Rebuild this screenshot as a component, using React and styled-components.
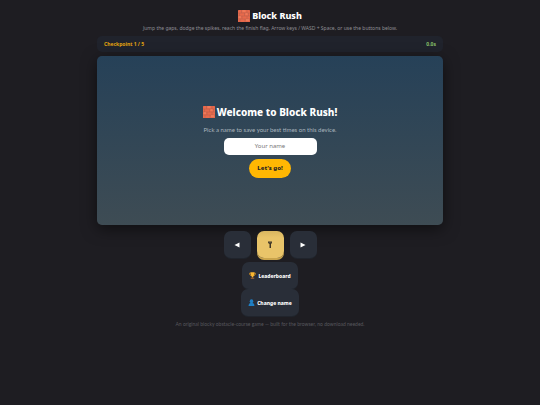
import React, { useState } from 'react'
import styled, { createGlobalStyle } from 'styled-components'

const GlobalStyle = createGlobalStyle`
  * {
    box-sizing: border-box;
  }

  body {
    margin: 0;
    min-height: 100vh;
    background: #1e1d22;
    color: #fff;
    font-family: 'Noto Sans', 'Open Sans', sans-serif;
  }

  button,
  input {
    font-family: inherit;
  }
`

function BrickIcon() {
  return (
    <svg width="12" height="12" viewBox="0 0 24 24" aria-hidden="true">
      <rect width="24" height="24" rx="1" fill="#e8694b" />
      <path
        d="M0 6h24M0 12h24M0 18h24M7 0v6M18 0v6M3 6v6M13 6v6M21 6v6M8 12v6M18 12v6M4 18v6M14 18v6"
        stroke="#b8604d"
        strokeWidth="1.1"
      />
      <path d="M9 2h6M15 8h4M1 14h5M16 20h6" stroke="#f58a68" strokeWidth="2" />
    </svg>
  )
}

function TrophyIcon() {
  return (
    <svg width="7" height="7" viewBox="0 0 24 24" aria-hidden="true">
      <path d="M6 4H2c0 6 2 8 6 9M18 4h4c0 6-2 8-6 9" fill="none" stroke="#e79a22" strokeWidth="2.5" />
      <path d="M5 1h14c0 9-2 13-5 15v3h-4v-3C7 14 5 10 5 1z" fill="#fcb830" />
      <path d="M6 19h12v5H6z" fill="#8a5a32" />
    </svg>
  )
}

function PersonIcon() {
  return (
    <svg width="7" height="7" viewBox="0 0 24 24" aria-hidden="true">
      <ellipse cx="12" cy="8" rx="6" ry="7" fill="#1f7fc4" />
      <path d="M2 24c0-7 3-9 7-10h6c4 1 7 3 7 10z" fill="#1f7fc4" />
    </svg>
  )
}

function Triangle({ left }) {
  return (
    <svg width="6" height="6" viewBox="0 0 12 12" aria-hidden="true">
      <path d={left ? 'M11 1v10L1 6z' : 'M1 1v10l10-5z'} fill="#fff" />
    </svg>
  )
}

function JumpIcon() {
  return (
    <svg width="6" height="8" viewBox="0 0 12 16" aria-hidden="true">
      <path d="M2 1h8v3L8 6v8H5V6L2 4z" fill="#3d3526" />
      <path d="M3 3h6" stroke="#756440" strokeWidth="1" />
    </svg>
  )
}

function App() {
  const [name, setName] = useState('')

  return (
    <Page>
      <GlobalStyle />
      <Header>
        <Title>
          <BrickIcon />
          Block Rush
        </Title>
        <Tagline>
          Jump the gaps, dodge the spikes, reach the finish flag. Arrow keys / WASD + Space, or use the buttons below.
        </Tagline>
      </Header>

      <StatusBar>
        <Status $color="#e5a60f">Checkpoint 1 / 5</Status>
        <Status $color="#86c06a">0.0s</Status>
      </StatusBar>

      <Stage>
        <Welcome onSubmit={(e) => e.preventDefault()}>
          <WelcomeTitle>
            <BrickIcon />
            Welcome to Block Rush!
          </WelcomeTitle>
          <Hint>Pick a name to save your best times on this device.</Hint>
          <NameInput
            aria-label="Your name"
            placeholder="Your name"
            value={name}
            onChange={(e) => setName(e.target.value)}
          />
          <StartButton type="submit">Let's go!</StartButton>
        </Welcome>
      </Stage>

      <Controls>
        <PadButton aria-label="Move left">
          <Triangle left />
        </PadButton>
        <PadButton $jump aria-label="Jump">
          <JumpIcon />
        </PadButton>
        <PadButton aria-label="Move right">
          <Triangle />
        </PadButton>
      </Controls>

      <Menu>
        <MenuButton>
          <TrophyIcon />
          Leaderboard
        </MenuButton>
        <MenuButton>
          <PersonIcon />
          Change name
        </MenuButton>
      </Menu>

      <Footer>An original blocky obstacle-course game — built for the browser, no download needed.</Footer>
    </Page>
  )
}

const Page = styled.div`
  display: flex;
  flex-direction: column;
  align-items: center;
  width: 100%;
  max-width: 362px;
  margin: 0 auto;
  padding: 8px 8px 16px;
`

const Header = styled.header`
  display: flex;
  flex-direction: column;
  align-items: center;
  text-align: center;
`

const Title = styled.h1`
  display: flex;
  align-items: center;
  gap: 2px;
  margin: 0;
  font-size: 9px;
  line-height: 15px;
  font-weight: 800;
`

const Tagline = styled.p`
  margin: 0;
  color: #8e8e94;
  font-size: 5px;
  line-height: 11px;
`

const StatusBar = styled.div`
  display: flex;
  align-items: center;
  justify-content: space-between;
  width: 100%;
  margin: 2px 0 4px;
  padding: 0 7px;
  border-radius: 5px;
  background: #20232c;
  line-height: 16px;
`

const Status = styled.span`
  color: ${(p) => p.$color};
  font-size: 5px;
  font-weight: 700;
`

const Stage = styled.main`
  display: flex;
  align-items: center;
  justify-content: center;
  width: 100%;
  aspect-ratio: 346 / 169;
  border-radius: 5px;
  background: linear-gradient(#264158, #3e4c54);
  box-shadow: 0 4px 15px rgba(0, 0, 0, 0.5);
`

const Welcome = styled.form`
  display: flex;
  flex-direction: column;
  align-items: center;
`

const WelcomeTitle = styled.h2`
  display: flex;
  align-items: center;
  gap: 2px;
  margin: 0 0 4px;
  font-size: 10px;
  line-height: 16px;
  font-weight: 800;
`

const Hint = styled.p`
  margin: 0 0 3px;
  color: #a9b4bd;
  font-family: Lato, 'Noto Sans', sans-serif;
  font-size: 6px;
  line-height: 11px;
`

const NameInput = styled.input`
  width: 93px;
  height: 17px;
  margin-bottom: 4px;
  padding: 0 6px;
  border: 0;
  border-radius: 5px;
  background: #fff;
  color: #222;
  font-size: 6px;
  text-align: center;

  &::placeholder {
    color: #777;
  }
`

const StartButton = styled.button`
  padding: 0 8px;
  border: 0;
  border-radius: 10px;
  background: #ffb703;
  color: #1e1d22;
  font-size: 6px;
  line-height: 19px;
  font-weight: 800;
  cursor: pointer;
`

const Controls = styled.div`
  display: flex;
  gap: 6px;
  margin-top: 6px;
`

const PadButton = styled.button`
  display: flex;
  align-items: center;
  justify-content: center;
  width: 27px;
  height: 27px;
  padding: 0;
  border: 0;
  border-radius: 7px;
  background: ${(p) => (p.$jump ? 'linear-gradient(#d9b660, #e9c469 25%)' : '#292e38')};
  box-shadow: ${(p) => (p.$jump ? '0 2px 0 #c9a44c' : '0 1px 0 #20242c')};
  cursor: pointer;
`

const Menu = styled.nav`
  display: flex;
  flex-direction: column;
  align-items: center;
  margin-top: 4px;
`

const MenuButton = styled.button`
  display: flex;
  align-items: center;
  gap: 2px;
  height: 27px;
  padding: 0 7px;
  border: 0;
  border-radius: 7px;
  background: #292e38;
  box-shadow: 0 1px 0 #20242c;
  color: #fff;
  font-size: 5px;
  font-weight: 800;
  cursor: pointer;
`

const Footer = styled.footer`
  margin-top: 3px;
  color: #57575d;
  font-family: Lato, 'Noto Sans', sans-serif;
  font-size: 5px;
  line-height: 11px;
  text-align: center;
`

export default App
